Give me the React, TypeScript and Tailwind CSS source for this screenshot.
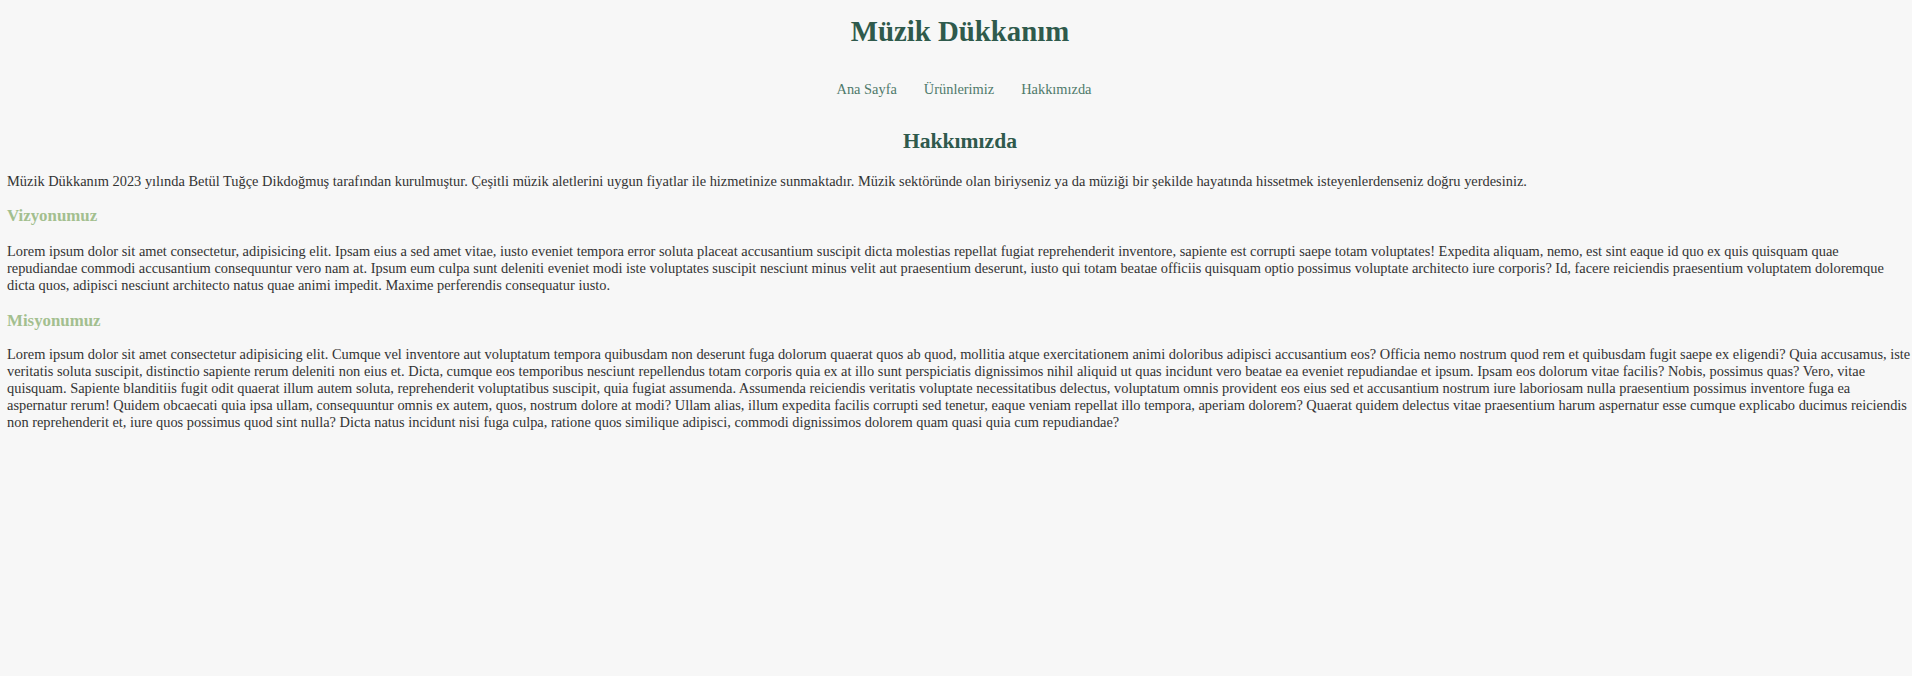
const vizyon =
  'Lorem ipsum dolor sit amet consectetur, adipisicing elit. Ipsam eius a sed amet vitae, iusto eveniet tempora error soluta placeat accusantium suscipit dicta molestias repellat fugiat reprehenderit inventore, sapiente est corrupti saepe totam voluptates! Expedita aliquam, nemo, est sint eaque id quo ex quis quisquam quae repudiandae commodi accusantium consequuntur vero nam at. Ipsum eum culpa sunt deleniti eveniet modi iste voluptates suscipit nesciunt minus velit aut praesentium deserunt, iusto qui totam beatae officiis quisquam optio possimus voluptate architecto iure corporis? Id, facere reiciendis praesentium voluptatem doloremque dicta quos, adipisci nesciunt architecto natus quae animi impedit. Maxime perferendis consequatur iusto.';

const misyon =
  'Lorem ipsum dolor sit amet consectetur adipisicing elit. Cumque vel inventore aut voluptatum tempora quibusdam non deserunt fuga dolorum quaerat quos ab quod, mollitia atque exercitationem animi doloribus adipisci accusantium eos? Officia nemo nostrum quod rem et quibusdam fugit saepe ex eligendi? Quia accusamus, iste veritatis soluta suscipit, distinctio sapiente rerum deleniti non eius et. Dicta, cumque eos temporibus nesciunt repellendus totam corporis quia ex at illo sunt perspiciatis dignissimos nihil aliquid ut quas incidunt vero beatae ea eveniet repudiandae et ipsum. Ipsam eos dolorum vitae facilis? Nobis, possimus quas? Vero, vitae quisquam. Sapiente blanditiis fugit odit quaerat illum autem soluta, reprehenderit voluptatibus suscipit, quia fugiat assumenda. Assumenda reiciendis veritatis voluptate necessitatibus delectus, voluptatum omnis provident eos eius sed et accusantium nostrum iure laboriosam nulla praesentium possimus inventore fuga ea aspernatur rerum! Quidem obcaecati quia ipsa ullam, consequuntur omnis ex autem, quos, nostrum dolore at modi? Ullam alias, illum expedita facilis corrupti sed tenetur, eaque veniam repellat illo tempora, aperiam dolorem? Quaerat quidem delectus vitae praesentium harum aspernatur esse cumque explicabo ducimus reiciendis non reprehenderit et, iure quos possimus quod sint nulla? Dicta natus incidunt nisi fuga culpa, ratione quos similique adipisci, commodi dignissimos dolorem quam quasi quia cum repudiandae?';

const navItems = ['Ana Sayfa', 'Ürünlerimiz', 'Hakkımızda'];

export default function App() {
  return (
    <div className="min-h-[676px] overflow-hidden bg-[#f7f7f7] font-['Liberation_Serif',serif] text-[#333]">
      {/* page body runs a little past the right edge, as in the original */}
      <div className="w-[1913px] pl-[7px]">
        <header className="flex flex-col items-center pt-[15px]">
          <h1 className="text-[28.8px] font-bold leading-[33px] text-[#2f5a4c]">Müzik Dükkanım</h1>
          <nav className="mt-[33px] flex gap-[27px] pl-[8px] text-[14.4px] leading-[17px] text-[#4f7a6b]">
            {navItems.map((item) => (
              <a key={item} href="#" className="hover:underline">
                {item}
              </a>
            ))}
          </nav>
        </header>

        <main>
          <h2 className="mt-[31px] text-center text-[21.6px] font-bold leading-[25px] text-[#2f5a4c]">
            Hakkımızda
          </h2>
          <p className="mt-[19px] text-[14.4px] leading-[17px]">
            Müzik Dükkanım 2023 yılında Betül Tuğçe Dikdoğmuş tarafından kurulmuştur. Çeşitli müzik aletlerini uygun
            fiyatlar ile hizmetinize sunmaktadır. Müzik sektöründe olan biriyseniz ya da müziği bir şekilde hayatında
            hissetmek isteyenlerdenseniz doğru yerdesiniz.
          </p>

          <h3 className="mt-[16px] text-[16.85px] font-bold leading-[19px] text-[#a3bf8f]">Vizyonumuz</h3>
          <p className="mt-[18px] max-w-[1898px] text-[14.4px] leading-[17px]">{vizyon}</p>

          <h3 className="mt-[17px] text-[16.85px] font-bold leading-[19px] text-[#a3bf8f]">Misyonumuz</h3>
          <p className="mt-[16px] text-[14.4px] leading-[17px]">{misyon}</p>
        </main>
      </div>
    </div>
  );
}
